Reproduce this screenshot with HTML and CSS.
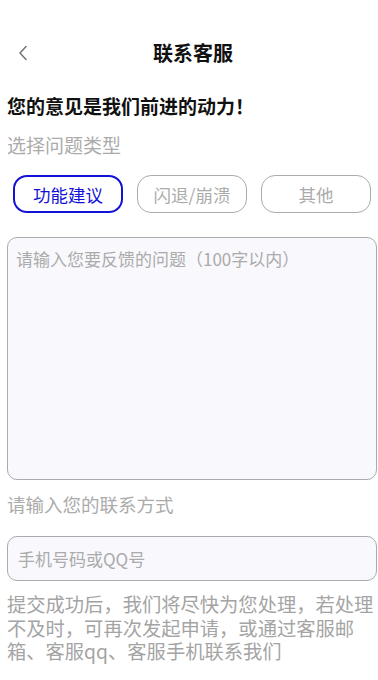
FILE: index.html
```html
<!DOCTYPE html>
<html lang="zh-CN">
<head>
    <meta charset="UTF-8">
    <meta name="viewport" content="width=device-width, initial-scale=1.0">
    <title>联系客服</title>
    <link rel="stylesheet" href="styles.css">
</head>
<body>
    <div class="header">
        <div class="back">
            <svg width="10" height="16" viewBox="0 0 10 16">
                <path d="M8 1.5 L2 8 L8 14.5" fill="none" stroke="#777" stroke-width="1.6" stroke-linecap="round" stroke-linejoin="round"/>
            </svg>
        </div>
        <div class="header-title">联系客服</div>
        <div></div>
    </div>

    <div class="content">
        <div class="slogan">您的意见是我们前进的动力！</div>
        <div class="label">选择问题类型</div>

        <div class="chips">
            <div class="chip active">功能建议</div>
            <div class="chip">闪退/崩溃</div>
            <div class="chip">其他</div>
        </div>

        <div class="feedback-box">
            <span class="placeholder">请输入您要反馈的问题（100字以内）</span>
        </div>

        <div class="label contact-label">请输入您的联系方式</div>

        <div class="contact-box">
            <span class="placeholder">手机号码或QQ号</span>
        </div>

        <div class="notice">提交成功后，我们将尽快为您处理，若处理不及时，可再次发起申请，或通过客服邮箱、客服qq、客服手机联系我们</div>
    </div>
</body>
</html>
```

FILE: styles.css
```css
* {
    margin: 0;
    padding: 0;
    box-sizing: border-box;
}

body {
    background: #ffffff;
    color: #111;
    font-family: "Noto Sans CJK SC", "Noto Sans", sans-serif;
    overflow: hidden;
}

.header {
    display: grid;
    grid-template-columns: 1fr auto 1fr;
    align-items: center;
    height: 40px;
    margin-top: 33px;
}

.back {
    display: flex;
    align-items: center;
    padding-left: 18px;
}

.back svg {
    display: block;
}

.header-title {
    font-size: 20px;
    font-weight: 700;
    line-height: 40px;
    color: #111;
    transform: translateX(4px);
}

.content {
    padding: 0 1px 0 7px;
}

.slogan {
    margin-top: 21px;
    font-size: 19px;
    font-weight: 700;
    line-height: 24px;
}

.label {
    margin-top: 15px;
    font-size: 19px;
    line-height: 24px;
    color: #ababab;
}

.chips {
    display: flex;
    gap: 14px;
    margin-top: 18px;
    padding-left: 6px;
}

.chip {
    width: 110px;
    height: 38px;
    border: 1.5px solid #ababab;
    border-radius: 14px;
    display: flex;
    align-items: center;
    justify-content: center;
    font-size: 17.5px;
    color: #ababab;
}

.chip.active {
    border: 2px solid #1212d6;
    color: #1212d6;
}

.feedback-box {
    margin-top: 24px;
    height: 243px;
    border: 1.5px solid #ababab;
    border-radius: 10px;
    background: #f8f8fd;
    padding: 9px 0 0 8px;
}

.placeholder {
    font-size: 17px;
    line-height: 22px;
    color: #ababab;
}

.contact-label {
    margin-top: 12px;
    font-size: 18.5px;
}

.contact-box {
    margin-top: 20px;
    height: 45px;
    border: 1.5px solid #ababab;
    border-radius: 10px;
    background: #f8f8fd;
    display: flex;
    align-items: center;
    padding-left: 10px;
}

.notice {
    margin-top: 12px;
    font-size: 19.3px;
    line-height: 23.5px;
    color: #a4a4a4;
}
```
